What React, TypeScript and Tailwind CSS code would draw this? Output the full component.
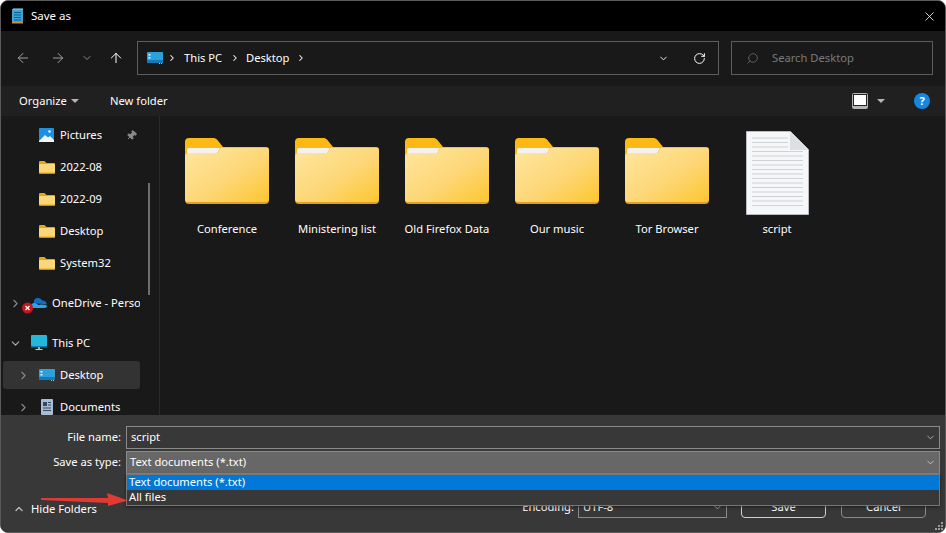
import { ArrowLeft, ArrowRight, ArrowUp, ChevronDown, ChevronRight, ChevronUp, Pin, RotateCw, Search, X } from "lucide-react";
import type { ReactNode } from "react";

const FOLDERS = ["Conference", "Ministering list", "Old Firefox Data", "Our music", "Tor Browser"];

function NotepadIcon() {
	return (
		<svg width="13" height="16" viewBox="0 0 13 16">
			<rect x="1" y="1" width="11" height="14" fill="#3aa5d6" />
			<rect x="1" y="14" width="11" height="1.5" fill="#d98a3a" />
			<path d="M3 0v2M5 0v2M7 0v2M9 0v2M11 0v2" stroke="#9adcf2" strokeWidth="1" />
			<path d="M3 4.5h7M3 7h7M3 9.5h7M3 12h7" stroke="#0f5f8a" strokeWidth="1" />
		</svg>
	);
}

function SmallFolder() {
	return (
		<svg width="16" height="14" viewBox="0 0 16 14">
			<path d="M0 2a1 1 0 0 1 1-1h4.500l2 2H15a1 1 0 0 1 1 1v2H0z" fill="#e9a50f" />
			<rect x="0" y="4" width="16" height="9.500" rx="1" fill="#fcd777" />
			<rect x="0" y="12.500" width="16" height="1" fill="#e0a92e" />
		</svg>
	);
}

function DesktopIcon({ size = 16 }: { size?: number }) {
	return (
		<svg width={size} height={(size * 12) / 16} viewBox="0 0 16 12">
			<rect x="0" y="0" width="16" height="11" rx="1" fill="#2aa0dc" />
			<rect x="0" y="8" width="16" height="3" fill="#1479b8" />
			<rect x="1.500" y="2" width="2" height="1.500" fill="#e6f6ff" />
			<rect x="1.500" y="5" width="2" height="1.500" fill="#e6f6ff" />
			<rect x="12" y="11" width="1" height="1" fill="#8fd0ee" />
			<rect x="14" y="11" width="1" height="1" fill="#8fd0ee" />
		</svg>
	);
}

function PicturesIcon() {
	return (
		<svg width="15" height="14" viewBox="0 0 15 14">
			<rect width="15" height="14" rx="1" fill="#1f8fe0" />
			<path d="M0 13l6-6 3 2.500 2-1.500 4 4v2H0z" fill="#eef6fc" />
			<circle cx="10.500" cy="3.500" r="1.200" fill="#fff" />
		</svg>
	);
}

function OneDriveIcon() {
	return (
		<svg width="26" height="22" viewBox="0 0 26 22">
			<path d="M12 11c-.5-3.500 1.500-5 4-5 2 0 3.300 1 4 2.500 2.500-.2 4.500 1.500 5 4z" fill="#0f6fc6" />
			<path d="M9 16c-1-2.500.8-5 3.500-5 1.700 0 3 .8 3.500 2 2.500-1 6-.5 9 .5 0 1.500-.8 2.500-2 2.500z" fill="#2aa4ea" />
			<circle cx="5.500" cy="16" r="5.500" fill="#c4161c" />
			<path d="M3.500 14l4 4M7.500 14l-4 4" stroke="#fff" strokeWidth="1.300" />
		</svg>
	);
}

function MonitorIcon() {
	return (
		<svg width="16" height="16" viewBox="0 0 16 16">
			<rect x="0" y="0" width="16" height="11" rx="1" fill="#25b6dc" />
			<path d="M0 11h16v1.500H0z" fill="#0e7ea3" />
			<rect x="7" y="12" width="2" height="2.500" fill="#9aa4aa" />
			<rect x="4.500" y="14" width="7" height="1" fill="#c7cdd1" />
		</svg>
	);
}

function DocumentsIcon() {
	return (
		<svg width="12" height="16" viewBox="0 0 12 16">
			<rect width="12" height="16" rx="1" fill="#a9bcd6" />
			<rect x="2" y="3" width="4" height="4" fill="#34475f" />
			<path d="M7 3.500h3M7 6h3M2 9h8M2 11.500h8" stroke="#34475f" strokeWidth="1" />
		</svg>
	);
}

function BigFolder({ id }: { id: string }) {
	return (
		<svg width="84" height="66" viewBox="0 0 84 66">
			<defs>
				<linearGradient id={id} x1="0" y1="0" x2="1" y2="1">
					<stop offset="0" stopColor="#ffe6a0" />
					<stop offset="0.55" stopColor="#fdd777" />
					<stop offset="1" stopColor="#fdc62f" />
				</linearGradient>
			</defs>
			<path d="M0 4a4 4 0 0 1 4-4h24c2 0 3 .6 4 1.500L38 9v10H0z" fill="#fdb913" />
			<path d="M2 12a2 2 0 0 1 2-2h32l-3 5H2z" fill="#f4f2ee" />
			<path d="M0 18a3 3 0 0 1 3-3h28c1 0 1.500-.5 2-1.500L35 10c.4-.7 1-1 2-1h44a3 3 0 0 1 3 3v50a4 4 0 0 1-4 4H4a4 4 0 0 1-4-4z" fill="#dfa02a" />
			<path d="M0 18a3 3 0 0 1 3-3h28c1 0 1.500-.5 2-1.500L35 10.500c.4-.7 1-1 2-1h44a3 3 0 0 1 3 3V61a3 3 0 0 1-3 3H3a3 3 0 0 1-3-3z" fill={`url(#${id})`} />
		</svg>
	);
}

function TextFile() {
	return (
		<svg width="63" height="84" viewBox="0 0 63 84">
			<path d="M.5.500h44l18 18v65H.5z" fill="#f6f7f9" stroke="#b9bcc2" />
			<path d="M44 1v18h18z" fill="#dcdfe3" />
			<path
				d="M6 7h36M6 11.500h36M6 16h36M6 20.500h51M6 25h51M6 29.500h51M6 34h51M6 38.500h51M6 43h51M6 47.500h51M6 52h51M6 56.500h51M6 61h51M6 65.500h51M6 70h51M6 74.500h51"
				stroke="#cfd2d6"
				strokeWidth="1"
			/>
		</svg>
	);
}

function NavRow({
	chevron,
	pad,
	icon,
	label,
	selected,
	spaced,
	pin,
}: {
	chevron?: "right" | "down";
	pad: string;
	icon: ReactNode;
	label: string;
	selected?: boolean;
	spaced?: boolean;
	pin?: boolean;
}) {
	return (
		<div className={`${spaced ? "mt-[10px]" : "mt-[2px]"} mb-[2px] flex h-[28px] w-[137px] shrink-0 items-center overflow-hidden rounded-[3px] ${pad} ${selected ? "bg-[#333333]" : ""}`}>
			<span className="flex w-[22px] shrink-0 items-center">
				{chevron === "right" && <ChevronRight className="h-[13px] w-[13px] text-[#8a8a8a]" strokeWidth={2} />}
				{chevron === "down" && <ChevronDown className="h-[13px] w-[13px] text-[#b0b0b0]" strokeWidth={2} />}
			</span>
			<span className="flex w-[21px] shrink-0 items-center">{icon}</span>
			<span className="whitespace-nowrap">{label}</span>
			{pin && <Pin className="ml-auto mr-[3px] h-[11px] w-[11px] rotate-45 fill-[#8c8c8c] text-[#8c8c8c]" />}
		</div>
	);
}

export default function App() {
	return (
		<div className="relative flex h-[533px] w-[946px] flex-col overflow-hidden rounded-[8px] border border-[#5a5a5a] bg-[#191919] font-['Noto_Sans',sans-serif] text-[11.2px] text-white">
			<header className="flex h-[30px] shrink-0 items-center bg-black pl-[10px] pr-[8px]">
				<NotepadIcon />
				<span className="ml-[7px] flex-1 text-[11.5px]">Save as</span>
				<X className="h-[15px] w-[15px]" strokeWidth={1.300} />
			</header>

			<div className="flex h-[55px] shrink-0 items-center bg-[#191919] pb-[1px] pl-[14px]">
				<ArrowLeft className="h-[16px] w-[16px] text-[#a0a0a0]" strokeWidth={1.500} />
				<ArrowRight className="ml-[19px] h-[16px] w-[16px] text-[#a0a0a0]" strokeWidth={1.500} />
				<ChevronDown className="ml-[15px] h-[12px] w-[12px] text-[#8a8a8a]" strokeWidth={2} />
				<ArrowUp className="ml-[15px] h-[16px] w-[16px] text-white" strokeWidth={1.500} />
				<div className="ml-[13px] flex h-[34px] w-[582px] items-center border border-[#5c5c5c] pl-[9px] pr-[12px]">
					<DesktopIcon />
					<ChevronRight className="ml-[4px] h-[10px] w-[10px]" strokeWidth={2.500} />
					<span className="ml-[7px] w-[41px]">This PC</span>
					<ChevronRight className="ml-[5px] h-[10px] w-[10px]" strokeWidth={2.500} />
					<span className="ml-[6px] w-[45px]">Desktop</span>
					<ChevronRight className="ml-[5px] h-[10px] w-[10px]" strokeWidth={2.500} />
					<span className="flex-1" />
					<ChevronDown className="h-[11px] w-[11px]" strokeWidth={2} />
					<RotateCw className="ml-[24px] h-[13px] w-[13px]" strokeWidth={1.800} />
				</div>
				<div className="ml-[12px] flex h-[34px] w-[202px] items-center border border-[#5c5c5c] pl-[14px] text-[#7a7a7a]">
					<Search className="h-[13px] w-[13px] -scale-x-100 text-[#6a6a6a]" strokeWidth={1.500} />
					<span className="ml-[13px]">Search Desktop</span>
				</div>
			</div>

			<div className="flex h-[30px] shrink-0 items-center bg-[#202020] pl-[18px] pr-[15px]">
				<span className="w-[47px]">Organize</span>
				<span className="ml-[5px] h-0 w-0 border-x-[4px] border-t-[4px] border-x-transparent border-t-[#b5b5b5]" />
				<span className="ml-[31px] flex-1">New folder</span>
				<span className="flex h-[16px] w-[16px] items-center justify-center rounded-[2px] bg-[#b4b4b4]">
					<span className="mb-[2px] h-[10px] w-[12px] bg-white ring-1 ring-[#222222]" />
				</span>
				<span className="ml-[9px] h-0 w-0 border-x-[4px] border-t-[4px] border-x-transparent border-t-[#b5b5b5]" />
				<span className="ml-[29px] flex h-[16px] w-[16px] items-center justify-center rounded-full bg-[#1587e0] text-[11px] font-bold">?</span>
			</div>

			<div className="flex min-h-0 flex-1">
				<nav className="relative flex w-[159px] shrink-0 flex-col overflow-hidden border-r border-[#2a2a2a] pl-[2px] pt-[3px]">
					<NavRow pad="pl-[14px]" icon={<PicturesIcon />} label="Pictures" pin />
					<NavRow pad="pl-[14px]" icon={<SmallFolder />} label="2022-08" />
					<NavRow pad="pl-[14px]" icon={<SmallFolder />} label="2022-09" />
					<NavRow pad="pl-[14px]" icon={<SmallFolder />} label="Desktop" />
					<NavRow pad="pl-[14px]" icon={<SmallFolder />} label="System32" />
					<NavRow chevron="right" spaced pad="pl-[6px]" icon={<span className="-ml-[9px] shrink-0"><OneDriveIcon /></span>} label="OneDrive - Perso" />
					<NavRow chevron="down" spaced pad="pl-[6px]" icon={<MonitorIcon />} label="This PC" />
					<NavRow chevron="right" selected pad="pl-[14px]" icon={<DesktopIcon />} label="Desktop" />
					<NavRow chevron="right" pad="pl-[14px]" icon={<span className="ml-[2px]"><DocumentsIcon /></span>} label="Documents" />
					<span className="absolute right-[9px] top-[67px] h-[112px] w-[2px] bg-[#6e6e6e]" />
				</nav>
				<main className="flex flex-1 items-start pl-[12px] pt-[15px]">
					{FOLDERS.map((name, i) => (
						<div key={name} className="flex w-[110px] shrink-0 flex-col items-center">
							<div className="mt-[7px]">
								<BigFolder id={`folder-${i}`} />
							</div>
							<span className="mt-[17px] whitespace-nowrap">{name}</span>
						</div>
					))}
					<div className="flex w-[110px] shrink-0 flex-col items-center">
						<TextFile />
						<span className="mt-[6px] whitespace-nowrap">script</span>
					</div>
				</main>
			</div>

			<footer className="flex h-[117px] shrink-0 flex-col bg-[#383838] pr-[5px] pt-[11px]">
				<div className="flex items-center">
					<span className="w-[120px] shrink-0 text-right">File name:</span>
					<div className="ml-[5px] flex h-[23px] flex-1 items-center justify-between border border-[#8a8a8a] pl-[4px] pr-[3px]">
						<span>script</span>
						<ChevronDown className="h-[11px] w-[11px] text-[#b5b5b5]" />
					</div>
				</div>
				<div className="mt-[2px] flex items-center">
					<span className="w-[120px] shrink-0 text-right">Save as type:</span>
					<div className="ml-[5px] flex h-[23px] flex-1 items-center justify-between border border-[#8a8a8a] bg-[#676767] pl-[3px] pr-[3px]">
						<span>Text documents (*.txt)</span>
						<ChevronDown className="h-[11px] w-[11px] text-[#c8c8c8]" />
					</div>
				</div>
				<div className="mt-[22px] flex items-center pl-[12px] pr-[14px]">
					<ChevronUp className="mt-[4px] h-[12px] w-[12px] text-[#c0c0c0]" strokeWidth={2.500} />
					<span className="ml-[6px] mt-[4px] flex-1">Hide Folders</span>
					<span>Encoding:</span>
					<div className="ml-[4px] flex h-[21px] w-[149px] items-center justify-between border border-[#8a8a8a] pl-[4px] pr-[3px]">
						<span>UTF-8</span>
						<ChevronDown className="h-[11px] w-[11px] text-[#b5b5b5]" />
					</div>
					<button type="button" className="ml-[14px] h-[22px] w-[85px] rounded-[4px] border border-[#d0d0d0]">Save</button>
					<button type="button" className="ml-[15px] h-[22px] w-[85px] rounded-[4px] border border-[#8a8a8a]">Cancel</button>
				</div>
			</footer>

			<div className="absolute left-[125px] top-[473px] w-[814px] border border-[#777777] bg-[#383838] shadow-[0_1px_3px_rgba(0,0,0,0.5)]">
				<div className="flex h-[15px] items-center bg-[#0078d7] pb-[1px] pl-[2px]">Text documents (*.txt)</div>
				<div className="flex h-[15px] items-center pb-[1px] pl-[2px]">All files</div>
			</div>

			<svg className="absolute left-[39px] top-[490px]" width="90" height="18" viewBox="0 0 90 18">
				<path d="M1 7 68 7 67 2 88 9.500 68 15 68 12 1 9z" fill="#e23a33" />
			</svg>

			<svg className="absolute bottom-[1px] right-[1px]" width="9" height="9" viewBox="0 0 9 9">
				<path d="M6 0h2v2H6zM3 3h2v2H3zM6 3h2v2H6zM0 6h2v2H0zM3 6h2v2H3zM6 6h2v2H6z" fill="#9a9a9a" />
			</svg>
		</div>
	);
}
